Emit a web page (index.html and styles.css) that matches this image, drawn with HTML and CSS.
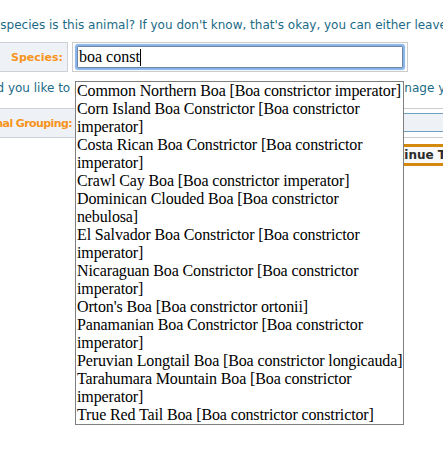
FILE: index.html
```html
<!DOCTYPE html>
<html lang="en">
<head>
<meta charset="utf-8">
<title>Species</title>
<link rel="stylesheet" href="styles.css">
</head>
<body>
<div class="page">
  <p class="intro first">What species is this animal? If you don't know, that's okay, you can either leave it blank or pick the closest match.</p>
  <div class="row">
    <div class="label"><span>Species:</span></div>
    <div class="field">
      <div class="input">boa const<span class="caret"></span></div>
      <ul class="suggest">
        <li>Common Northern Boa [Boa constrictor imperator]</li>
        <li>Corn Island Boa Constrictor [Boa constrictor imperator]</li>
        <li>Costa Rican Boa Constrictor [Boa constrictor imperator]</li>
        <li>Crawl Cay Boa [Boa constrictor imperator]</li>
        <li>Dominican Clouded Boa [Boa constrictor nebulosa]</li>
        <li>El Salvador Boa Constrictor [Boa constrictor imperator]</li>
        <li>Nicaraguan Boa Constrictor [Boa constrictor imperator]</li>
        <li>Orton's Boa [Boa constrictor ortonii]</li>
        <li>Panamanian Boa Constrictor [Boa constrictor imperator]</li>
        <li>Peruvian Longtail Boa [Boa constrictor longicauda]</li>
        <li>Tarahumara Mountain Boa [Boa constrictor imperator]</li>
        <li>True Red Tail Boa [Boa constrictor constrictor]</li>
      </ul>
    </div>
  </div>
  <p class="intro second">Would you like to provide any detail about this animal? If so, you can manage your images below.</p>
  <div class="row row2">
    <div class="label wide"><span>Animal Grouping:</span></div>
    <div class="field2">
      <div class="select"></div>
    </div>
  </div>
  <div class="actions">
    <button class="btn" type="button">Continue To Next Step</button>
  </div>
</div>
</body>
</html>
```

FILE: styles.css
```css
html, body {
  margin: 0;
  padding: 0;
  background: #ffffff;
  overflow: hidden;
}
.page {
  width: 443px;
  height: 452px;
  overflow: hidden;
  font-family: "DejaVu Sans", Verdana, sans-serif;
}
.intro {
  margin: 0;
  font-size: 12px;
  line-height: 15px;
  color: #1b6b86;
  white-space: nowrap;
}
.first {
  padding-top: 18px;
  text-indent: -35px;
}
.second {
  margin-top: 9px;
  text-indent: -33px;
}
.row {
  display: flex;
  margin-top: 9px;
  height: 30px;
}
.row2 {
  margin-top: 12px;
}
.label {
  box-sizing: border-box;
  width: 68px;
  height: 30px;
  flex: none;
  display: flex;
  justify-content: flex-end;
  align-items: center;
  overflow: hidden;
  white-space: nowrap;
  background: #eef2f6;
  border: 1px solid #cdd2d7;
  border-left: none;
  padding-right: 4px;
  font-size: 11px;
  font-weight: bold;
  color: #f7941d;
}
.label span {
  flex: none;
}
.label.wide {
  width: 82px;
  padding-right: 9px;
  letter-spacing: -0.6px;
}
.field {
  position: relative;
  box-sizing: border-box;
  margin-left: 4px;
  width: 336px;
  height: 30px;
  border: 1px solid #cccccc;
  padding: 3px 4px;
  background: #ffffff;
}
.input {
  box-sizing: border-box;
  height: 22px;
  border: 1px solid #6f87a6;
  box-shadow: 0 0 1px 2px #86b2ea;
  border-radius: 1px;
  padding: 0 1px;
  font-family: "Liberation Serif", "Times New Roman", serif;
  font-size: 16px;
  line-height: 20px;
  color: #000000;
  white-space: nowrap;
}
.caret {
  display: inline-block;
  width: 0;
  height: 17px;
  border-left: 1px solid #000000;
  vertical-align: -4px;
}
.suggest {
  position: absolute;
  left: 2px;
  top: 38px;
  z-index: 5;
  box-sizing: border-box;
  width: 329px;
  margin: 0;
  padding: 0 0 0 1px;
  list-style: none;
  background: #ffffff;
  border: 1px solid #7f7f7f;
  font-family: "Liberation Serif", "Times New Roman", serif;
  font-size: 16px;
  line-height: 18px;
  letter-spacing: -0.13px;
  color: #000000;
}
.suggest li {
  margin: 0;
  padding: 0;
}
.field2 {
  box-sizing: border-box;
  flex: 1;
  height: 30px;
  margin-left: 2px;
  border-top: 1px solid #cccccc;
  border-bottom: 1px solid #cccccc;
  padding: 4px 0 5px 4px;
  background: #ffffff;
}
.select {
  box-sizing: border-box;
  height: 19px;
  width: 100%;
  border: 1px solid #6ea2c0;
  border-right: none;
  background: #eef2f6;
}
.actions {
  margin-top: 6px;
  padding-left: 365px;
  white-space: nowrap;
}
.btn {
  box-sizing: border-box;
  height: 22px;
  margin: 0;
  padding: 0 8px;
  border: none;
  border-top: 3px solid #d4880e;
  border-bottom: 3px solid #d4880e;
  background: #f8f8f8;
  font-family: "DejaVu Sans", Verdana, sans-serif;
  font-size: 12px;
  font-weight: bold;
  line-height: 16px;
  color: #2b2b2b;
  white-space: nowrap;
}
```
